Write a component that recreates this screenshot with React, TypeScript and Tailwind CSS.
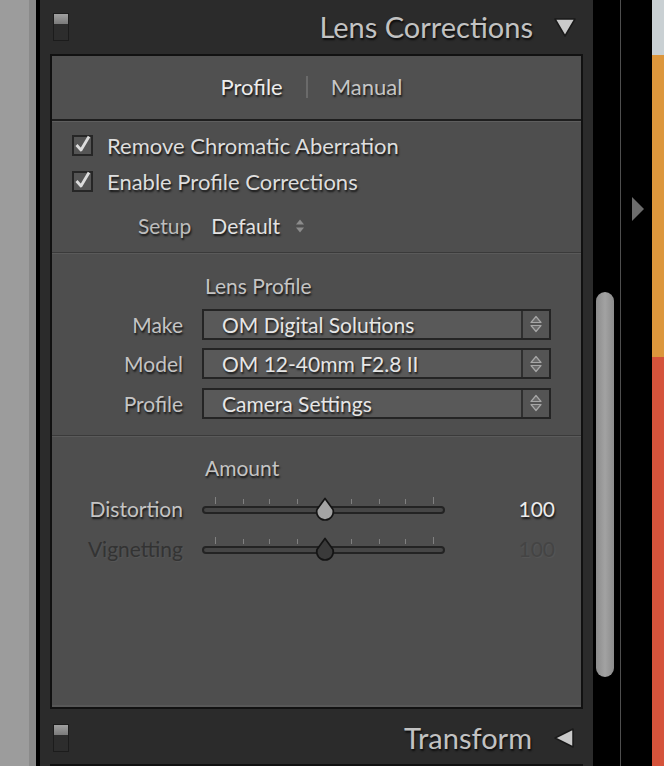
import React from "react";

const shadow = "[text-shadow:1px_2px_2px_rgba(0,0,0,0.75)]";

function Toggle() {
  return (
    <div className="flex h-[28px] w-[16px] flex-col border border-[#1c1c1c] bg-[#2d2d2d]">
      <div className="h-[10px] bg-gradient-to-b from-[#a0a0a0] to-[#7a7a7a]" />
    </div>
  );
}

function CheckBox() {
  return (
    <svg width="22" height="22" viewBox="0 0 22 22" className="shrink-0">
      <rect x="1" y="2" width="19" height="19" fill="#555" stroke="#262626" strokeWidth="2" />
      <path d="M4.5 11 L9 16 L17 2.5" fill="none" stroke="#dcdcdc" strokeWidth="2.8" strokeLinejoin="round" />
    </svg>
  );
}

function UpDown() {
  return (
    <svg width="14" height="20" viewBox="0 0 14 20">
      <path d="M2 8.5 L7 2.5 L12 8.5 Z" fill="#6a6a6a" stroke="#a6a6a6" strokeWidth="1.2" strokeLinejoin="round" />
      <path d="M2 11.5 L7 17.5 L12 11.5 Z" fill="#6a6a6a" stroke="#a6a6a6" strokeWidth="1.2" strokeLinejoin="round" />
    </svg>
  );
}

function Select({ value }: { value: string }) {
  return (
    <div className="flex h-[31px] w-[349px] border-2 border-[#242424] bg-[#595959]">
      <div className={`flex flex-1 items-center pl-[18px] text-[21px] text-[#e6e6e6] ${shadow}`}>{value}</div>
      <div className="flex w-[28px] items-center justify-center border-l-2 border-[#2f2f2f] bg-[#545454]">
        <UpDown />
      </div>
    </div>
  );
}

function Slider({ pos, dim }: { pos: number; dim?: boolean }) {
  const ticks = [13, 41, 67, 95, 123, 149, 177, 203, 231];
  return (
    <div className="relative h-[24px] w-[243px]">
      {ticks.map((t, i) => (
        <div
          key={t}
          className="absolute w-px bg-[#808080]"
          style={{ left: t, top: i === 0 || i === ticks.length - 1 ? 0 : 2, height: i === 0 || i === ticks.length - 1 ? 7 : 5 }}
        />
      ))}
      <div className="absolute left-0 top-[9px] h-[8px] w-[243px] rounded-full border-2 border-[#232323] bg-[#464646]" />
      <svg width="26" height="26" viewBox="0 0 26 26" className="absolute top-0" style={{ left: pos - 13 }}>
        <path
          d="M13 1.5 L21 12.5 A8.3 8.3 0 1 1 5 12.5 Z"
          fill={dim ? "#3a3a3a" : "#a4a4a4"}
          stroke="#141414"
          strokeWidth="1.7"
          strokeLinejoin="round"
        />
      </svg>
    </div>
  );
}

function Separator() {
  return (
    <div>
      <div className="h-px bg-[#3a3a3a]" />
      <div className="h-px bg-[#5a5a5a]" />
    </div>
  );
}

function Label({ children, dim }: { children: React.ReactNode; dim?: boolean }) {
  return (
    <div
      className={`w-[131px] shrink-0 text-right text-[21px] ${
        dim ? "text-[#333] [text-shadow:1px_1px_1px_rgba(255,255,255,0.05)]" : `text-[#c4c4c4] ${shadow}`
      }`}
    >
      {children}
    </div>
  );
}

export default function App() {
  return (
    <div className="flex h-[766px] w-[664px] overflow-hidden bg-black font-['Lato',sans-serif]">
      {/* left edge */}
      <div className="w-[29px] bg-[#9c9c9c]" />
      <div className="w-[7px] bg-[#8a8a8a]" />
      <div className="w-[4px] bg-black" />

      {/* panel */}
      <div className="flex w-[553px] flex-col bg-[#2b2b2b]">
        {/* header */}
        <div className="flex h-[54px] shrink-0 items-center pl-[13px] pr-[16px]">
          <Toggle />
          <div className={`ml-auto text-[29px] text-[#c2c2c2] ${shadow}`}>Lens Corrections</div>
          <svg width="24" height="22" viewBox="0 0 24 22" className="ml-[20px]">
            <path d="M2 3 L22 3 L12 20 Z" fill="#cacaca" stroke="#1a1a1a" strokeWidth="1.5" strokeLinejoin="round" />
          </svg>
        </div>

        {/* inner box */}
        <div className="mx-[10px] flex h-[655px] shrink-0 flex-col border-2 border-[#111] bg-[#4e4e4e]">
          {/* tabs */}
          <div className="flex h-[63px] items-center justify-center gap-[23px] bg-[#505050] pb-[2px] pr-[10px] text-[22px]">
            <span className={`text-[#ececec] ${shadow}`}>Profile</span>
            <span className="h-[22px] w-[2px] bg-[#6a6a6a]" />
            <span className={`text-[#c6c6c6] ${shadow}`}>Manual</span>
          </div>
          <div className="h-[2px] bg-[#1e1e1e]" />
          <div className="h-px bg-[#5e5e5e]" />

          {/* checkboxes */}
          <div className="flex h-[130px] flex-col pl-[20px] pt-[9px]">
            <div className="flex h-[28px] items-center gap-[13px]">
              <CheckBox />
              <span className={`text-[22px] text-[#dedede] ${shadow}`}>Remove Chromatic Aberration</span>
            </div>
            <div className="mt-[8px] flex h-[28px] items-center gap-[13px]">
              <CheckBox />
              <span className={`text-[22px] text-[#dedede] ${shadow}`}>Enable Profile Corrections</span>
            </div>
            <div className="mt-[17px] flex h-[28px] items-center pl-[66px] text-[21px]">
              <span className={`text-[#bdbdbd] ${shadow}`}>Setup</span>
              <span className={`ml-[20px] text-[#e2e2e2] ${shadow}`}>Default</span>
              <svg width="10" height="16" viewBox="0 0 10 16" className="ml-[15px]">
                <path d="M1 6.5 L5 1.5 L9 6.5 Z" fill="#8c8c8c" />
                <path d="M1 9.5 L5 14.5 L9 9.5 Z" fill="#8c8c8c" />
              </svg>
            </div>
          </div>
          <Separator />

          {/* lens profile */}
          <div className="flex h-[181px] flex-col pt-[16px]">
            <div className={`pl-[153px] text-[21px] text-[#c4c4c4] ${shadow}`}>Lens Profile</div>
            <div className="mt-[7px] flex flex-col gap-[8px]">
              {[
                ["Make", "OM Digital Solutions"],
                ["Model", "OM 12-40mm F2.8 II"],
                ["Profile", "Camera Settings"],
              ].map(([l, v]) => (
                <div key={l} className="flex items-center gap-[19px]">
                  <Label>{l}</Label>
                  <Select value={v} />
                </div>
              ))}
            </div>
          </div>
          <Separator />

          {/* amount */}
          <div className="flex flex-1 flex-col pt-[15px]">
            <div className={`pl-[153px] text-[21px] text-[#c4c4c4] ${shadow}`}>Amount</div>
            <div className="mt-[11px] flex h-[28px] items-center gap-[19px]">
              <Label>Distortion</Label>
              <Slider pos={123} />
              <span className={`ml-auto pr-[26px] text-[21px] text-[#ececec] ${shadow}`}>100</span>
            </div>
            <div className="mt-[12px] flex h-[28px] items-center gap-[19px]">
              <Label dim>Vignetting</Label>
              <Slider pos={123} dim />
              <span className="ml-auto pr-[26px] text-[21px] text-[#444] [text-shadow:1px_1px_1px_rgba(255,255,255,0.05)]">100</span>
            </div>
          </div>
          <div className="h-[2px] bg-[#575757]" />
        </div>

        {/* transform header */}
        <div className="flex h-[55px] shrink-0 items-center pl-[13px] pr-[17px] pt-[3px]">
          <Toggle />
          <div className={`ml-auto text-[29px] text-[#c2c2c2] ${shadow}`}>Transform</div>
          <svg width="24" height="24" viewBox="0 0 24 24" className="ml-[20px]">
            <path d="M3 12 L21 3 L21 21 Z" fill="#cacaca" stroke="#1a1a1a" strokeWidth="1.5" strokeLinejoin="round" />
          </svg>
        </div>
        <div className="mx-[10px] h-[4px] border-x-2 border-t-2 border-[#111] bg-[#4e4e4e]" />
      </div>

      {/* scroll column */}
      <div className="flex w-[27px] flex-col items-center bg-black pt-[292px]">
        <div className="ml-[-4px] h-[385px] w-[18px] rounded-full bg-gradient-to-r from-[#8c8c8c] via-[#a2a2a2] to-[#8c8c8c]" />
      </div>
      <div className="w-px bg-[#4e4e4e]" />
      <div className="flex w-[31px] flex-col bg-black pl-[10px] pt-[196px]">
        <svg width="14" height="26" viewBox="0 0 14 26">
          <path d="M1 1 L13 13 L1 25 Z" fill="#6c6c6c" />
        </svg>
      </div>
      {/* photo edge */}
      <div className="flex w-[12px] flex-col">
        <div className="h-[55px] bg-[#c9d0d3]" />
        <div className="h-[302px] bg-[#dc963c]" />
        <div className="flex-1 bg-[#d5533b]" />
      </div>
    </div>
  );
}
